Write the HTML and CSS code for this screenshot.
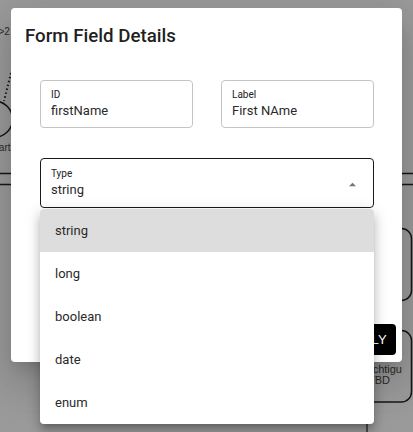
FILE: index.html
```html
<!DOCTYPE html>
<html>
<head>
<meta charset="utf-8">
<link rel="stylesheet" href="styles.css">
</head>
<body>
<div class="canvas">
  <svg class="diagram" width="413" height="432" viewBox="0 0 413 432">
    <text x="-1.5" y="35.3" class="bg-text">&gt;2</text>
    <line x1="11" y1="73" x2="4" y2="101" class="dots"/>
    <circle cx="-5.7" cy="119.2" r="18.2" class="stroke"/>
    <text x="10.5" y="151" text-anchor="end" class="bg-text">Start</text>
    <line x1="0" y1="173.5" x2="413" y2="173.5" class="stroke"/>
    <line x1="0" y1="184.5" x2="413" y2="184.5" class="stroke"/>
    <rect x="300" y="228.5" width="111.5" height="72" rx="10" class="stroke"/>
    <rect x="300" y="330.5" width="111.5" height="71.5" rx="10" class="stroke"/>
    <text x="402" y="372.5" text-anchor="end" class="box-text">Wichtigu</text>
    <text x="390" y="384" text-anchor="end" class="box-text">-TBD</text>
    <line x1="367" y1="422" x2="367" y2="432" class="stroke thin"/>
  </svg>

  <div class="dialog">
    <h2 class="dialog-title">Form Field Details</h2>
    <div class="dialog-content">
      <div class="field-row">
        <div class="field">
          <div class="field-label">ID</div>
          <div class="field-value">firstName</div>
        </div>
        <div class="field">
          <div class="field-label">Label</div>
          <div class="field-value">First NAme</div>
        </div>
      </div>
      <div class="field select">
        <div class="select-text">
          <div class="field-label">Type</div>
          <div class="field-value">string</div>
        </div>
        <svg class="select-icon" width="17" height="17" viewBox="0 0 24 24"><path d="M7 14.5l5-5 5 5z"/></svg>
      </div>
    </div>
    <div class="dialog-actions">
      <button class="apply-btn">APPLY</button>
    </div>
  </div>

  <ul class="menu">
    <li class="menu-item selected">string</li>
    <li class="menu-item">long</li>
    <li class="menu-item">boolean</li>
    <li class="menu-item">date</li>
    <li class="menu-item">enum</li>
  </ul>
</div>
</body>
</html>
```

FILE: styles.css
```css
* { box-sizing: border-box; }
html, body { margin: 0; padding: 0; }
body {
  width: 413px;
  height: 432px;
  overflow: hidden;
  background: #9a9a9a;
  font-family: Roboto, "Liberation Sans", sans-serif;
}
.canvas {
  position: relative;
  width: 413px;
  height: 432px;
}
.diagram {
  position: absolute;
  left: 0;
  top: 0;
}
.stroke {
  fill: none;
  stroke: #161616;
  stroke-width: 1.5;
}
.thin { stroke-width: 1.2; }
.dots {
  stroke: #161616;
  stroke-width: 2;
  stroke-dasharray: 1.5 2.5;
}
.bg-text {
  font-family: "Liberation Sans", Arial, sans-serif;
  font-size: 10px;
  fill: #2a2a2a;
}
.box-text {
  font-family: "Liberation Sans", Arial, sans-serif;
  font-size: 11px;
  fill: #2a2a2a;
}

.dialog {
  position: absolute;
  left: 11px;
  top: 8px;
  width: 391px;
  height: 354px;
  background: #fff;
  border-radius: 4px;
  display: flex;
  flex-direction: column;
  box-shadow: 0 11px 15px -7px rgba(0,0,0,0.16), 0 24px 38px 3px rgba(0,0,0,0.1), 0 9px 46px 8px rgba(0,0,0,0.08);
}
.dialog-title {
  margin: 0;
  padding: 12px 14px 0;
  font-size: 18.7px;
  font-weight: 500;
  line-height: 32px;
  color: #1f1f1f;
}
.dialog-content {
  padding: 28px 28px 0 29px;
  display: flex;
  flex-direction: column;
  gap: 30px;
}
.field-row {
  display: grid;
  grid-template-columns: 1fr 1fr;
  gap: 28px;
}
.field {
  border: 1px solid #c4c4c4;
  border-radius: 4px;
  padding: 7px 10px 7px;
}
.field-label {
  font-size: 10px;
  line-height: 13px;
  color: #222;
}
.field-value {
  margin-top: 1px;
  font-size: 13px;
  line-height: 18px;
  color: #2a2a2a;
}
.select {
  border-color: #1a1a1a;
  padding: 8px 12px 8px 10px;
  display: flex;
  align-items: center;
}
.select-text { flex: 1; }
.select-icon { fill: #757575; margin-top: 2px; }

.dialog-actions {
  margin-top: auto;
  padding: 0 6px 7px;
  display: flex;
  justify-content: flex-end;
}
.apply-btn {
  height: 31px;
  padding: 0 9px;
  border: none;
  border-radius: 4px;
  background: #000;
  color: #fff;
  font-family: "Liberation Sans", Arial, sans-serif;
  font-size: 13px;
  letter-spacing: 0.3px;
}

.menu {
  position: absolute;
  left: 40px;
  top: 209px;
  width: 334px;
  margin: 0;
  padding: 0;
  list-style: none;
  background: #fff;
  border-radius: 4px;
  overflow: hidden;
  box-shadow: 0 5px 5px -3px rgba(0,0,0,0.2), 0 8px 10px 1px rgba(0,0,0,0.14), 0 3px 14px 2px rgba(0,0,0,0.12);
}
.menu-item {
  height: 43px;
  display: flex;
  align-items: center;
  padding-left: 15px;
  font-size: 13px;
  color: #2a2a2a;
}
.menu-item.selected { background: #dddddd; }
```
